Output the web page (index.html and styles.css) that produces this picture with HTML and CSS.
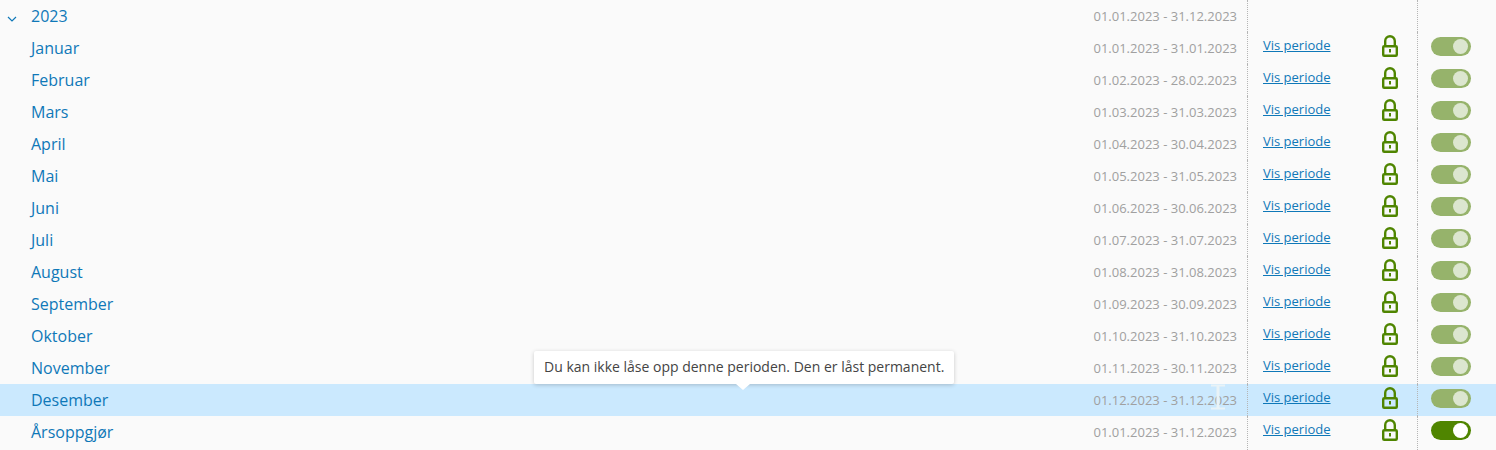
FILE: index.html
```html
<!DOCTYPE html>
<html lang="no">
<head>
  <meta charset="UTF-8">
  <title>Perioder</title>
  <link rel="stylesheet" href="styles.css">
</head>
<body>
  <svg class="icon-defs" width="0" height="0">
    <symbol id="lock" viewBox="0 0 16 22">
      <path d="M3.200 11V6a4.800 4.800 0 0 1 9.600 0v5" fill="none" stroke="currentColor" stroke-width="2.400"/>
      <rect x="1.200" y="11.200" width="13.600" height="9.600" rx="1" fill="none" stroke="currentColor" stroke-width="2.400"/>
      <rect x="7" y="14" width="2" height="3.500" fill="currentColor"/>
    </symbol>
  </svg>

  <div class="period-list">
    <div class="row year">
      <div class="main">
        <svg class="chevron" width="10" height="6" viewBox="0 0 10 6"><path d="M1 1l4 4 4-4" fill="none" stroke="#0f78b8" stroke-width="1.200"/></svg>
        <span class="name">2023</span>
        <span class="dates">01.01.2023 - 31.12.2023</span>
      </div>
      <div class="actions"></div>
      <div class="switch-cell"></div>
    </div>

    <div class="row">
      <div class="main"><span class="name">Januar</span><span class="dates">01.01.2023 - 31.01.2023</span></div>
      <div class="actions"><a href="#" class="show-link">Vis periode</a><svg class="lock"><use href="#lock"/></svg></div>
      <div class="switch-cell"><span class="toggle"></span></div>
    </div>
    <div class="row">
      <div class="main"><span class="name">Februar</span><span class="dates">01.02.2023 - 28.02.2023</span></div>
      <div class="actions"><a href="#" class="show-link">Vis periode</a><svg class="lock"><use href="#lock"/></svg></div>
      <div class="switch-cell"><span class="toggle"></span></div>
    </div>
    <div class="row">
      <div class="main"><span class="name">Mars</span><span class="dates">01.03.2023 - 31.03.2023</span></div>
      <div class="actions"><a href="#" class="show-link">Vis periode</a><svg class="lock"><use href="#lock"/></svg></div>
      <div class="switch-cell"><span class="toggle"></span></div>
    </div>
    <div class="row">
      <div class="main"><span class="name">April</span><span class="dates">01.04.2023 - 30.04.2023</span></div>
      <div class="actions"><a href="#" class="show-link">Vis periode</a><svg class="lock"><use href="#lock"/></svg></div>
      <div class="switch-cell"><span class="toggle"></span></div>
    </div>
    <div class="row">
      <div class="main"><span class="name">Mai</span><span class="dates">01.05.2023 - 31.05.2023</span></div>
      <div class="actions"><a href="#" class="show-link">Vis periode</a><svg class="lock"><use href="#lock"/></svg></div>
      <div class="switch-cell"><span class="toggle"></span></div>
    </div>
    <div class="row">
      <div class="main"><span class="name">Juni</span><span class="dates">01.06.2023 - 30.06.2023</span></div>
      <div class="actions"><a href="#" class="show-link">Vis periode</a><svg class="lock"><use href="#lock"/></svg></div>
      <div class="switch-cell"><span class="toggle"></span></div>
    </div>
    <div class="row">
      <div class="main"><span class="name">Juli</span><span class="dates">01.07.2023 - 31.07.2023</span></div>
      <div class="actions"><a href="#" class="show-link">Vis periode</a><svg class="lock"><use href="#lock"/></svg></div>
      <div class="switch-cell"><span class="toggle"></span></div>
    </div>
    <div class="row">
      <div class="main"><span class="name">August</span><span class="dates">01.08.2023 - 31.08.2023</span></div>
      <div class="actions"><a href="#" class="show-link">Vis periode</a><svg class="lock"><use href="#lock"/></svg></div>
      <div class="switch-cell"><span class="toggle"></span></div>
    </div>
    <div class="row">
      <div class="main"><span class="name">September</span><span class="dates">01.09.2023 - 30.09.2023</span></div>
      <div class="actions"><a href="#" class="show-link">Vis periode</a><svg class="lock"><use href="#lock"/></svg></div>
      <div class="switch-cell"><span class="toggle"></span></div>
    </div>
    <div class="row">
      <div class="main"><span class="name">Oktober</span><span class="dates">01.10.2023 - 31.10.2023</span></div>
      <div class="actions"><a href="#" class="show-link">Vis periode</a><svg class="lock"><use href="#lock"/></svg></div>
      <div class="switch-cell"><span class="toggle"></span></div>
    </div>
    <div class="row">
      <div class="main"><span class="name">November</span><span class="dates">01.11.2023 - 30.11.2023</span></div>
      <div class="actions"><a href="#" class="show-link">Vis periode</a><svg class="lock"><use href="#lock"/></svg></div>
      <div class="switch-cell"><span class="toggle"></span></div>
    </div>
    <div class="row hover">
      <div class="main">
        <span class="name">Desember</span><span class="dates">01.12.2023 - 31.12.2023</span>
        <div class="tooltip">Du kan ikke låse opp denne perioden. Den er låst permanent.</div>
        <svg class="text-cursor" width="14" height="26" viewBox="0 0 14 26"><path d="M0 1.500h14M0 24.500h14" fill="none" stroke="#e9f3f7" stroke-width="2"/><path d="M7 1v24" fill="none" stroke="#e9f3f7" stroke-width="3"/></svg>
      </div>
      <div class="actions"><a href="#" class="show-link">Vis periode</a><svg class="lock"><use href="#lock"/></svg></div>
      <div class="switch-cell"><span class="toggle"></span></div>
    </div>
    <div class="row last">
      <div class="main"><span class="name">Årsoppgjør</span><span class="dates">01.01.2023 - 31.12.2023</span></div>
      <div class="actions"><a href="#" class="show-link">Vis periode</a><svg class="lock"><use href="#lock"/></svg></div>
      <div class="switch-cell"><span class="toggle active"></span></div>
    </div>
  </div>
</body>
</html>
```

FILE: styles.css
```css
html,
body {
  margin: 0;
  height: 450px;
  overflow: hidden;
}

body {
  font-family: "Open Sans", sans-serif;
  background-color: #fafafa;
  color: #444;
}

.icon-defs {
  position: absolute;
}

.period-list {
  display: flex;
  flex-direction: column;
  height: 450px;
}

.row {
  display: flex;
  flex: 0 0 32px;
  height: 32px;
}

/* the dotted lines run on to the bottom of the page */
.row.last {
  flex: 1;
  height: auto;
}

.row.last .main,
.row.last .actions,
.row.last .switch-cell {
  padding-bottom: 2px;
}

.row.hover {
  background-color: #cbe9fe;
}

.main {
  position: relative;
  display: flex;
  align-items: center;
  flex: 0 0 1247px;
  box-sizing: border-box;
  padding: 0 10px 0 31px;
}

.chevron {
  position: absolute;
  left: 7px;
  top: 16px;
}

.name {
  flex: 1;
  font-size: 16px;
  color: #0f78b8;
}

.dates {
  font-size: 13px;
  color: #a0a0a0;
}

.actions {
  display: flex;
  flex: 0 0 170px;
  box-sizing: border-box;
  padding: 0 19px 0 15px;
  border-left: 1px dotted #b5b5b5;
  align-items: center;
  justify-content: space-between;
}

.show-link {
  font-size: 13px;
  color: #0f78b8;
  text-decoration: underline;
  margin-top: -7px;
}

.lock {
  width: 16px;
  height: 22px;
  color: #4f8500;
  margin-top: -4px;
}

.switch-cell {
  display: flex;
  flex: 1;
  align-items: center;
  box-sizing: border-box;
  padding-left: 13px;
  border-left: 1px dotted #b5b5b5;
}

.toggle {
  position: relative;
  display: block;
  width: 40px;
  height: 19px;
  margin-top: -3px;
  border-radius: 10px;
  background-color: #96b36b;
}

.toggle::after {
  content: "";
  position: absolute;
  right: 3px;
  top: 2px;
  width: 15px;
  height: 15px;
  border-radius: 50%;
  background-color: #dce6cf;
}

.toggle.active {
  background-color: #4f8500;
}

.toggle.active::after {
  background-color: #fff;
}

.tooltip {
  position: absolute;
  left: 534px;
  bottom: 32px;
  width: 420px;
  box-sizing: border-box;
  height: 33px;
  line-height: 32px;
  padding-left: 10px;
  font-size: 14px;
  white-space: nowrap;
  color: #444;
  background-color: #fff;
  box-shadow: 0 1px 4px rgba(0, 0, 0, 0.2);
  border-radius: 2px;
}

.tooltip::after {
  content: "";
  position: absolute;
  left: 202px;
  bottom: -6px;
  border-left: 7px solid transparent;
  border-right: 7px solid transparent;
  border-top: 6px solid #fff;
}

.text-cursor {
  position: absolute;
  left: 1211px;
  top: 0;
}
```
